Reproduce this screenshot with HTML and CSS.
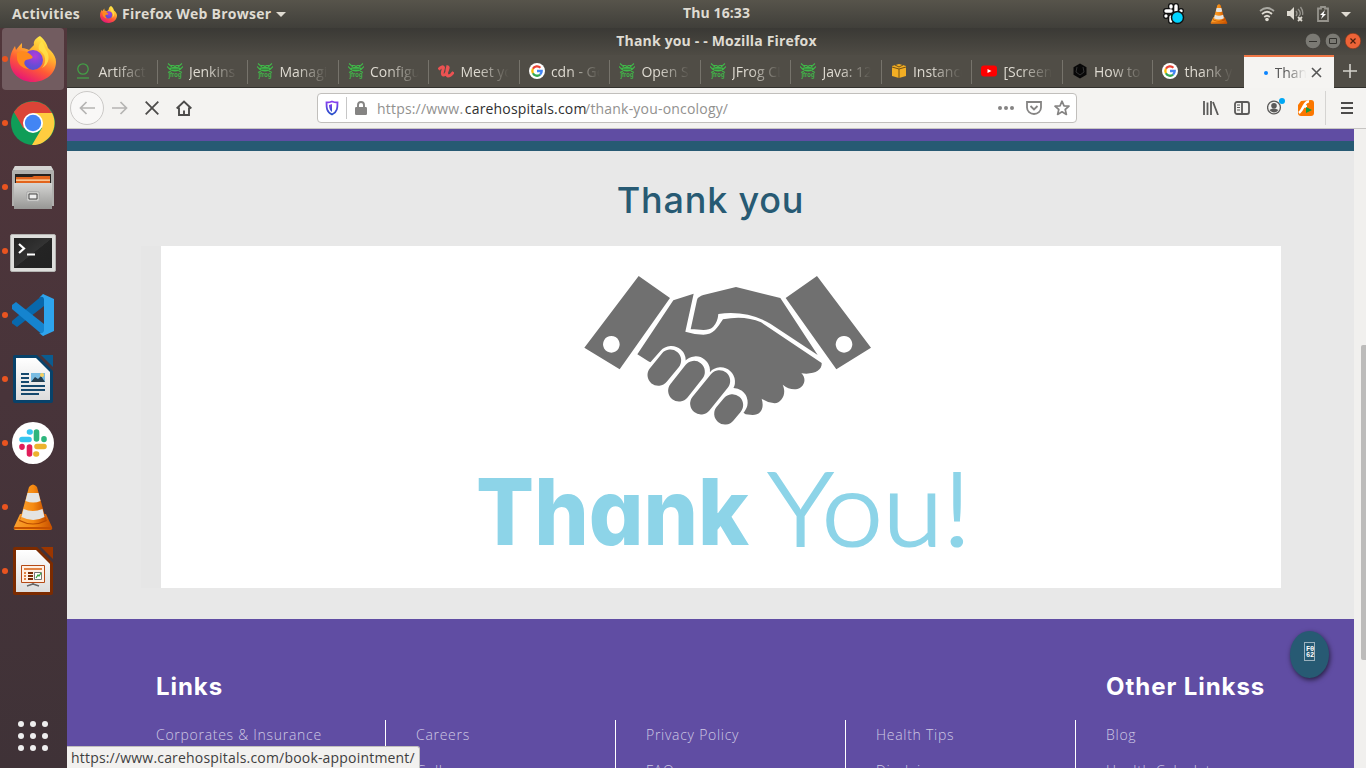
FILE: index.html
```html
<!DOCTYPE html>
<html lang="en">
<head>
<meta charset="utf-8">
<title>Thank you - - Mozilla Firefox</title>
<link rel="stylesheet" href="styles.css">
</head>
<body>
<svg class="defs" width="0" height="0" aria-hidden="true">
  <defs>
    <linearGradient id="ffFlame" x1=".8" y1="0" x2=".3" y2="1"><stop offset="0" stop-color="#fff44f"/><stop offset=".35" stop-color="#ffb52e"/><stop offset=".65" stop-color="#ff5a36"/><stop offset="1" stop-color="#e5127a"/></linearGradient>
    <radialGradient id="ffGlobe" cx=".6" cy=".3" r=".8"><stop offset="0" stop-color="#b13bdc"/><stop offset=".6" stop-color="#6b4bd6"/><stop offset="1" stop-color="#4d55d0"/></radialGradient>
    <linearGradient id="metal" x2="0" y2="1"><stop offset="0" stop-color="#d5d5d3"/><stop offset="1" stop-color="#979795"/></linearGradient>
    <linearGradient id="cone" x2="1" y2="0"><stop offset="0" stop-color="#f9a030"/><stop offset=".5" stop-color="#f68b12"/><stop offset="1" stop-color="#c85000"/></linearGradient>
    <linearGradient id="paper" x2="0" y2="1"><stop offset="0" stop-color="#fff"/><stop offset="1" stop-color="#dcdcdc"/></linearGradient>
    <linearGradient id="term" x2="1" y2="1"><stop offset="0" stop-color="#222"/><stop offset=".5" stop-color="#333"/><stop offset=".51" stop-color="#242424"/><stop offset="1" stop-color="#222"/></linearGradient>
    <linearGradient id="shield" x2="0" y2="1"><stop offset="0" stop-color="#8a3ff0"/><stop offset="1" stop-color="#2450c8"/></linearGradient>
  </defs>
  <symbol id="firefox" viewBox="0 0 46 46">
    <path d="M30 0c6 5 7 9 8 12l3 3c3 3 5 7 5 11 0 11-10 20-23 20S0 37 0 25C0 18 3 13 5 10l1 4c2-3 4-5 6-7v5c3 0 5 1 7 2l5-5c-1-4 2-7 6-9z" fill="url(#ffFlame)"/>
    <circle cx="23" cy="24" r="10" fill="url(#ffGlobe)"/>
    <path d="M7 17c5-3 11-2 15 3 2 2-1 3-6 4-3 2-2 6 3 9-7 0-12-6-12-11z" fill="#ff8a1d"/>
    <path d="M29 14c7 4 8 12 3 18 8-4 8-13 4-18l-4-9c-3 3-4 5-3 9z" fill="#ffe34b" opacity=".8"/>
  </symbol>
  <symbol id="frog" viewBox="0 0 16 16">
    <path d="M1 .5 5 4M15 .5 11 4M0 3.500l3 3M16 3.500l-3 3M4 2.500h2.500l1.500 1 1.500-1H12M1 9.500l3-1.500M15 9.500 12 8" fill="none" stroke="#40b649" stroke-width="1.100"/>
    <path d="M2 5.500C3 3.500 13 3.500 14 5.500 13 9.500 3 9.500 2 5.500z" fill="#40b649"/>
    <path d="M4 6.200h8" stroke="#315d32" stroke-width=".8"/>
    <text x="1.500" y="14.300" textLength="13" lengthAdjust="spacingAndGlyphs" class="frog-word">jfrog</text>
  </symbol>
  <symbol id="google" viewBox="0 0 16 16">
    <circle cx="8" cy="8" r="8" fill="#fff"/>
    <g fill="none" stroke-width="2.300"><path d="M11.400 4.700A4.700 4.700 0 0 0 3.900 5.800" stroke="#ea4335"/><path d="M3.900 5.800a4.700 4.700 0 0 0 0 4.400" stroke="#fbbc05"/><path d="M3.900 10.200a4.700 4.700 0 0 0 7.200 1.400" stroke="#34a853"/><path d="M11.100 11.600A4.700 4.700 0 0 0 12.700 8H8" stroke="#4285f4"/></g>
  </symbol>
  <symbol id="vlc" viewBox="0 0 42 46">
    <path d="M8 30h26l6 13q1 3-2 3H4q-3 0-2-3z" fill="url(#cone)"/><path d="M2 43h38v2H2z" fill="#c55000"/>
    <path d="M10 30h22l3 7q-14 7-28 0z" fill="#b84a00"/>
    <path d="M17 3q4-5 8 0l9 33q-13 7-26 0z" fill="url(#cone)"/>
    <path d="M15.500 9h11l2 8q-7 3-15 0zM11.500 25q9 4 19 0l2 8q-11 6-23 0z" fill="#e4e4e2"/>
  </symbol>
  <symbol id="slackmark" viewBox="0 0 28 28">
    <g stroke-width="5.600" stroke-linecap="round" fill="none"><path d="M3 10.500h7M10.500 3h.6" stroke="#36c5f0"/><path d="M17.500 3v7M25 10.500v-.6" stroke="#2eb67d"/><path d="M25 17.500h-7M17.500 25h-.6" stroke="#ecb22e"/><path d="M10.500 25v-7M3 17.500v.6" stroke="#e01e5a"/></g>
  </symbol>
</svg>

<header class="topbar">
  <span class="activities">Activities</span>
  <svg class="top-ff" width="17" height="17"><use href="#firefox"/></svg>
  <span class="appname">Firefox Web Browser</span>
  <i class="caret"></i>
  <span class="clock">Thu 16:33</span>
  <div class="tray">
    <svg width="22" height="22" viewBox="0 0 22 22"><g stroke="#111" stroke-width="6" stroke-linecap="round"><path d="M3 8h5M8 3v1M13 3v5M18 8v0M8 18v-4M3 13v0"/></g><g stroke="#fff" stroke-width="3.400" stroke-linecap="round"><path d="M3 8h5M8 3v1M13 3v5M18 8v0M8 18v-4M3 13v0"/></g><circle cx="14.500" cy="14.500" r="6" fill="#00d4ff" stroke="#111" stroke-width="1.500"/></svg>
    <svg class="t-vlc" width="18" height="20"><use href="#vlc"/></svg>
    <svg class="t-wifi" width="16" height="16" viewBox="0 0 16 16" fill="none" stroke-width="1.700"><path d="M1 5q7-6 14 0" stroke="#aaa9a2"/><path d="M3 8q5-4.500 10 0M5.200 11q2.800-2.500 5.600 0" stroke="#dfdbd2"/><circle cx="8" cy="13.500" r="1.800" fill="#dfdbd2"/></svg>
    <svg class="t-vol" width="17" height="16" viewBox="0 0 17 16"><path d="M0 5h3l4-4v13l-4-4H0z" fill="#dfdbd2"/><path d="M9 5q2 2.500 0 5M11 3q4 4 1 7M13.500 1q3 4 2 8" fill="none" stroke="#96948d" stroke-width="1.300"/><path d="m11 11 4 4m0-4-4 4" stroke="#dfdbd2" stroke-width="1.800"/></svg>
    <svg class="t-bat" width="12" height="16" viewBox="0 0 12 16"><path d="M1 2.500h3V1h4v1.500h3V15H1z" fill="none" stroke="#96948d" stroke-width="1.800"/><path d="M8 4 3 9h2.500L4 13l5-5H6.500z" fill="#fff"/></svg>
    <i class="caret"></i>
  </div>
</header>

<div class="desktop">
  <nav class="dock">
    <div class="app active"><svg width="46" height="46"><use href="#firefox"/></svg></div>
    <div class="app"><svg width="44" height="44" viewBox="0 0 44 44"><circle cx="22" cy="22" r="22" fill="#109d58"/><path d="M2.900 11A22 22 0 0 1 41.100 12H22L12.500 27.500z" fill="#db4437"/><path d="M22 12h19.100A22 22 0 0 1 21 44l10-17z" fill="#ffcd40"/><circle cx="22" cy="22" r="10" fill="#fff"/><circle cx="22" cy="22" r="8.200" fill="#4285f4"/></svg></div>
    <div class="app"><svg width="42" height="44" viewBox="0 0 42 44"><path d="M3 1h36l3 5v35H0V6z" fill="#b0b0ae"/><path d="M3 1h36l2 4H1z" fill="#d5d5d3"/><path d="M3 9h36v10H3z" fill="#262220"/><path d="M4 12h16l2-1h16v7H4z" fill="#e2641c"/><path d="M4 14.500h34v1.200H4z" fill="#ffe3b8"/><path d="M2 18h38v26H2z" fill="url(#metal)"/><rect x="14.500" y="26.500" width="13" height="10" rx="2" fill="#c9c9c7" stroke="#aaa"/><path d="M17 29h8v5h-8z" fill="#eee" stroke="#444"/></svg></div>
    <div class="app"><svg class="terminal" width="46" height="38" viewBox="0 0 46 38"><rect x=".5" y=".5" width="45" height="37" rx="1.500" fill="#dededc" stroke="#b4b4b2"/><path d="M4 4h38v30H4z" fill="url(#term)"/><path d="m9 10 5 4.500L9 19" fill="none" stroke="#fff" stroke-width="2.200"/><path d="M17 20.500h8" stroke="#fff" stroke-width="2"/></svg></div>
    <div class="app"><svg width="43" height="42" viewBox="0 0 43 42"><path d="m0 27 32-27v12L5 33 1 30q-2-1-1-3z" fill="#0868ac"/><path d="m0 11 4-3 28 22v12L0 15q-1-2 0-4z" fill="#1584cf"/><path d="m31 0 11 5v32l-11 5-4-3q4 1 5-2V5q-1-4-5-1z" fill="#2ea4ed"/></svg></div>
    <div class="app"><svg width="40" height="48" viewBox="0 0 40 48"><path d="M2 0h22l16 16v30q0 2-2 2H2q-2 0-2-2V2q0-2 2-2z" fill="#08426a"/><path d="M28 0h12v12z" fill="#0b5c90"/><path d="M3 3h20l14 14v28H3z" fill="url(#paper)"/><path d="M8 19h8M8 23h8M8 27h8M8 31h24M8 35h24M8 39h18" stroke="#15496d" stroke-width="2"/><path d="M18 18h14v9H18z" fill="#79bce2"/><path d="m18 27 4-5 3 2 3-3 4 6z" fill="#253f50"/><circle cx="29" cy="20" r="2" fill="#f7cf5b"/></svg></div>
    <div class="app"><svg width="42" height="42" viewBox="0 0 42 42"><circle cx="21" cy="21" r="21" fill="#fff"/><use href="#slackmark" x="7" y="7" width="28" height="28"/></svg></div>
    <div class="app"><svg width="42" height="46"><use href="#vlc"/></svg></div>
    <div class="app"><svg width="40" height="48" viewBox="0 0 40 48"><path d="M2 0h22l16 16v30q0 2-2 2H2q-2 0-2-2V2q0-2 2-2z" fill="#7c2b00"/><path d="M28 0h12v12z" fill="#9b3600"/><path d="M3 3h20l14 14v28H3z" fill="url(#paper)"/><path d="M8.500 18.500h23v17h-23z" fill="#fff0e4" stroke="#b54a16"/><path d="M11 22h18" stroke="#e28345" stroke-width="2"/><path d="M15 26h5M15 29h5M15 32h5" stroke="#7b2d04" stroke-width="2"/><path d="M11 26h2M11 29h2M11 32h2" stroke="#e28345" stroke-width="2"/><path d="M21.500 25.500h7v7h-7z" fill="#fff" stroke="#777"/><path d="m23 31 2-3 1 1 2-3" fill="none" stroke="#37a53b" stroke-width="1.200"/><path d="M20 36v1l-6 2M20 37l6 2" fill="none" stroke="#666" stroke-width="1.500"/></svg></div>
    <div class="grid-btn"><i></i><i></i><i></i><i></i><i></i><i></i><i></i><i></i><i></i></div>
  </nav>

  <main class="window">
    <div class="titlebar">
      <span class="wintitle">Thank you - - Mozilla Firefox</span>
      <div class="winbtns">
        <svg width="16" height="16" viewBox="0 0 16 16"><circle cx="8" cy="8" r="7.800" fill="#7b7a74" stroke="#353430" stroke-width=".6"/><path d="M4 8.500h8" stroke="#33322e"/></svg>
        <svg width="16" height="16" viewBox="0 0 16 16"><circle cx="8" cy="8" r="7.800" fill="#7b7a74" stroke="#353430" stroke-width=".6"/><path d="M4.500 5.500h7v5h-7z" fill="none" stroke="#33322e"/></svg>
        <svg width="16" height="16" viewBox="0 0 16 16"><circle cx="8" cy="8" r="7.800" fill="#ed6337" stroke="#823519" stroke-width=".6"/><path d="m5.500 5.500 5 5m0-5-5 5" stroke="#4b1f0e" stroke-width="1.200"/></svg>
      </div>
    </div>
    <div class="tabs">
      <div class="tab"><svg width="16" height="16" viewBox="0 0 16 16" fill="none" stroke="#43a047" stroke-width="1.300"><circle cx="7" cy="6" r="5.200"/><path d="M1 15h12"/></svg><span>Artifactory</span></div>
      <div class="tab"><svg width="16" height="16"><use href="#frog"/></svg><span>Jenkins</span></div>
      <div class="tab"><svg width="16" height="16"><use href="#frog"/></svg><span>Managing</span></div>
      <div class="tab"><svg width="16" height="16"><use href="#frog"/></svg><span>Configure</span></div>
      <div class="tab"><svg width="16" height="16" viewBox="0 0 16 16"><path d="M.5 6.500q4-4 5-2c0 2-2.500 6-.5 7.500 2.500 1 4.500-4 5.500-8M10 2.500C8.500 8 8 12.500 10 13q3 0 5.500-4" fill="none" stroke="#ec5252" stroke-width="2.900"/></svg><span>Meet your</span></div>
      <div class="tab"><svg width="16" height="16"><use href="#google"/></svg><span>cdn - Google</span></div>
      <div class="tab"><svg width="16" height="16"><use href="#frog"/></svg><span>Open Source</span></div>
      <div class="tab"><svg width="16" height="16"><use href="#frog"/></svg><span>JFrog CLI</span></div>
      <div class="tab"><svg width="16" height="16"><use href="#frog"/></svg><span>Java: 12</span></div>
      <div class="tab"><svg width="16" height="16" viewBox="0 0 16 16"><path d="m1 3 7-2 7 2v10l-7 2-7-2z" fill="#f2ae24"/><path d="m1 4 7 2 7-2M8 6v9M4 2l4 2 4-2" fill="none" stroke="#715017"/></svg><span>Instances</span></div>
      <div class="tab"><svg width="16" height="16" viewBox="0 0 16 16"><rect y="2.500" width="16" height="11" rx="3" fill="#f00"/><path d="m6.500 6 4 2-4 2z" fill="#fff"/></svg><span>[Screen</span></div>
      <div class="tab"><svg width="16" height="16" viewBox="0 0 16 16"><path d="m8 .5 6.500 3.700v7.600L8 15.500l-6.500-3.700V4.200z" fill="#080808"/><path d="m5 4-1 5 4 3 4-3-1-5" fill="none" stroke="#343434"/></svg><span>How to</span></div>
      <div class="tab last"><svg width="16" height="16"><use href="#google"/></svg><span>thank you</span></div>
      <div class="tab current"><i class="dot"></i><span>Thank</span><svg class="close" width="11" height="11" viewBox="0 0 11 11"><path d="m1 1 9 9m0-9-9 9" stroke="#555" stroke-width="1.600"/></svg></div>
      <svg class="plus" width="14" height="14" viewBox="0 0 14 14"><path d="M7 0v14M0 7h14" stroke="#d4d2cc" stroke-width="1.600"/></svg>
    </div>

    <div class="toolbar">
      <div class="back"><svg width="16" height="14" viewBox="0 0 16 14" fill="none" stroke="#b5b4b3" stroke-width="1.700"><path d="M16 7H1.500M7.500 1l-6 6 6 6"/></svg></div>
      <svg class="fwd" width="16" height="14" viewBox="0 0 16 14" fill="none" stroke="#b5b4b3" stroke-width="1.700"><path d="M0 7h14.500M8.500 1l6 6-6 6"/></svg>
      <svg class="stop" width="14" height="14" viewBox="0 0 14 14"><path d="m.7.700 12.600 12.600m0-12.600L.7 13.300" stroke="#4c4b4a" stroke-width="1.800"/></svg>
      <svg class="home" width="16" height="16" viewBox="0 0 16 16" fill="none" stroke="#4c4b4a" stroke-width="1.900"><path d="m.7 8.500 7.300-7 7.300 7M3 7.500V15h10V7.500"/><path d="M8 15v-4.500"/></svg>
      <div class="urlbar">
        <svg class="u-shield" width="14" height="16" viewBox="0 0 14 16"><path d="M7 1.500q2.500 1 5.500 1c0 5 0 9.500-5.500 12-5.500-2.500-5.500-7-5.500-12 3 0 4.500-.5 5.500-1z" fill="none" stroke="url(#shield)" stroke-width="1.800"/><path d="M7 4v8q-3-2-3-7z" fill="url(#shield)"/></svg>
        <i class="sep"></i>
        <svg class="u-lock" width="12" height="14" viewBox="0 0 12 14"><path d="M3 7V4q0-3 3-3t3 3v3" fill="none" stroke="#858483" stroke-width="1.900"/><rect y="6" width="12" height="8" rx="1.200" fill="#858483"/></svg>
        <span class="url">https://www.<b>carehospitals.com</b>/thank-you-oncology/</span>
        <svg class="u-dots" width="16" height="4" viewBox="0 0 16 4" fill="#858483"><circle cx="2" cy="2" r="2"/><circle cx="8" cy="2" r="2"/><circle cx="14" cy="2" r="2"/></svg>
        <svg class="u-pocket" width="16" height="14" viewBox="0 0 16 14" fill="none" stroke="#858483" stroke-width="1.800"><path d="M1 1h14v5.500a7 6.500 0 0 1-14 0zM4.500 5 8 8.500 11.500 5"/></svg>
        <svg class="u-star" width="16" height="16" viewBox="0 0 16 16" fill="none" stroke="#858483" stroke-width="1.700" stroke-linejoin="round"><path d="m8 1.200 2 4.600 5 .4-3.800 3.300 1.200 4.900L8 11.800l-4.400 2.600 1.200-4.900L1 6.200l5-.4z"/></svg>
      </div>
      <svg class="b-lib" width="16" height="14" viewBox="0 0 16 14" stroke="#5b5a59" stroke-width="1.800"><path d="M1 0v14M4.500 1.500V14M8 0v14M10 1l5 13"/></svg>
      <svg class="b-side" width="16" height="14" viewBox="0 0 16 14" fill="none" stroke="#5b5a59" stroke-width="1.800"><rect x="1" y="1" width="14" height="12" rx="2"/><path d="M8 1v12"/><path d="M3 4h3M3 6.500h3M3 9h3" stroke-width="1"/></svg>
      <svg class="b-acct" width="18" height="17" viewBox="0 0 18 17"><circle cx="7" cy="9.500" r="6.400" fill="none" stroke="#5b5a59" stroke-width="1.300"/><circle cx="7" cy="7.700" r="2.800" fill="#5b5a59"/><path d="M2.500 12q4.500-3 9 0-4.500 5-9 0z" fill="#5b5a59"/><circle cx="15" cy="3" r="3" fill="#00a8f5"/></svg>
      <svg class="b-flash" width="16" height="16" viewBox="0 0 16 16"><path d="M3 1 13 0q3 0 3 3v10q0 3-3 3H3q-3 0-3-3V5z" fill="#fb7700"/><path d="M11 1.500C6 1 6 9 1 13M4.500 6.500H9" fill="none" stroke="#fff" stroke-width="2.500"/><path d="m8 7 6 3-6 3z" fill="#159b3b"/></svg>
      <i class="bar"></i>
      <svg class="b-menu" width="12" height="12" viewBox="0 0 12 12" stroke="#4c4b4a" stroke-width="1.900"><path d="M0 1h12M0 6h12M0 11h12"/></svg>
    </div>

    <div class="viewport">
      <div class="page">
        <div class="purple-strip"></div>
        <div class="teal-strip"></div>
        <section class="thanks">
          <h1>Thank you</h1>
          <div class="card">
            <svg class="art" width="1120" height="342" viewBox="161 246 1120 342">
              <g transform="translate(570 260) scale(.33333)" fill="#707070">
                <path fill-rule="evenodd" d="M206 48 300 114 149 328 43 263zM124 228a25 25 0 1 0 .1 0zM741 48 903 263 799 328 647 114zM822 228a25 25 0 1 0 .1 0z"/>
                <path d="M389 110Q393 107 400 105L498 81 631 114 743 285 601 191Q530 150 445 162 443 187 429 201C414 215 390 208 362 208L381 120Q382 113 389 110z"/>
                <path d="M310 121 371 101 346 215Q375 224 400 224C432 224 440 205 459 178Q523 165 573 187L755 309C757 330 735 345 694 340 712 356 702 382 682 387Q659 391 638 374C651 402 635 427 614 430Q593 428 575 416C584 445 572 465 548 465L527 463 440 405 235 304 202 283z"/>
                <g fill="none" stroke-linecap="round" stroke="#fff" stroke-width="86"><path d="M304 301 267 343M377 332 326 393M452 365 392 433M490 427 464 462"/></g>
                <g fill="none" stroke-linecap="round" stroke="#707070" stroke-width="65"><path d="M301 301 265 345M372 335 327 392M448 363 393 431M487 435 465 461"/></g>
              </g>
              <text class="art-bold" x="476" y="545" textLength="273" lengthAdjust="spacingAndGlyphs">Thank</text>
              <text class="art-thin" x="768" y="545.500" textLength="203" lengthAdjust="spacingAndGlyphs">You!</text>
            </svg>
          </div>
        </section>
        <footer class="footer">
          <div class="col first"><h2>Links</h2><ul><li>Corporates &amp; Insurance</li></ul></div>
          <div class="col"><h2></h2><ul><li>Careers</li><li>Gallery</li></ul></div>
          <div class="col"><h2></h2><ul><li>Privacy Policy</li><li>FAQ</li></ul></div>
          <div class="col"><h2></h2><ul><li>Health Tips</li><li>Disclaimer</li></ul></div>
          <div class="col end"><h2>Other Linkss</h2><ul><li>Blog</li><li>Health Calculator</li></ul></div>
        </footer>
      </div>
      <div class="scroll"><i></i></div>
      <div class="totop"><span>F0<br>62</span></div>
      <div class="status">https://www.carehospitals.com/book-appointment/</div>
    </div>
  </main>
</div>
</body>
</html>
```
FILE: styles.css
```css
* { box-sizing: border-box; }
body { margin: 0; width: 1366px; height: 768px; overflow: hidden; display: flex; flex-direction: column; font-family: "Open Sans", "Noto Sans", sans-serif; font-size: 14px; }
svg { display: block; flex: none; }
.defs { position: absolute; }
.frog-word { font: bold 6.500px "Liberation Sans", sans-serif; fill: #40b649; }

.topbar { height: 28px; flex: none; display: flex; align-items: center; position: relative; background: linear-gradient(#57544b, #403f3a); color: #dfdbd2; font-weight: 700; padding: 0 15px 0 12px; line-height: 26px; }
.topbar > span { white-space: nowrap; }
.activities { width: 88px; letter-spacing: .3px; }
.top-ff { margin-right: 5px; }
.appname { width: 150px; letter-spacing: .24px; }
.caret { border: 5px solid transparent; border-top: 5px solid #dfdbd2; border-bottom: 0; flex: none; }
.appname + .caret { margin-left: 4px; }
.clock { position: absolute; left: 683px; top: 0; letter-spacing: .1px; }
.tray { margin-left: auto; display: flex; align-items: center; }
.t-vlc { margin-left: 25px; }
.t-wifi { margin-left: 31px; }
.t-vol { margin-left: 12px; }
.t-bat { margin-left: 13px; margin-right: 12px; }

.desktop { flex: 1; display: flex; min-height: 0; }
.dock { width: 67px; flex: none; display: flex; flex-direction: column; background: linear-gradient(#51363b, #48343a 50%, #3f3237); padding-bottom: 17px; }
.app { height: 62px; margin: 0 3px 2px 2px; flex: none; border-radius: 4px; position: relative; display: flex; align-items: center; justify-content: center; }
.app::before { content: ""; position: absolute; left: 0; top: 28px; width: 6px; height: 6px; border-radius: 50%; background: #e95420; }
.active { background: #725c60; }
.terminal { margin-top: 3px; }
.grid-btn { margin: auto auto 0 18px; display: grid; grid-template-columns: repeat(3, 6px); gap: 6px; }
.grid-btn i { width: 6px; height: 6px; border-radius: 50%; background: #eee; }

.window { flex: 1; min-width: 0; display: flex; flex-direction: column; }
.titlebar { height: 27px; flex: none; display: flex; justify-content: center; position: relative; background: linear-gradient(#3a3935, #4e4b44); color: #dfdbd2; font-weight: 700; line-height: 26px; font-size: 14px; }
.wintitle { white-space: nowrap; letter-spacing: .17px; }
.winbtns { position: absolute; right: 5px; top: 5px; display: flex; gap: 4px; }

.tabs { height: 33px; flex: none; display: flex; background: #504d46; border-bottom: 1px solid #32312d; }
.tab { width: 90.500px; flex: none; display: flex; align-items: center; gap: 6px; padding-left: 9.400px; color: #dfdbd2; position: relative; }
.tab::after { content: ""; position: absolute; right: 0; top: 5px; width: 1px; height: 24px; background: #76736b; }
.tab.last::after, .tab.current::after { display: none; }
.tab span { width: 50px; overflow: hidden; white-space: nowrap; -webkit-mask-image: linear-gradient(90deg, #000 35%, transparent 98%); mask-image: linear-gradient(90deg, #000 35%, transparent 98%); }
.tab.current { background: #f5f4f2; border-top: 2px solid #f07746; margin-bottom: -1px; padding-left: 20px; gap: 7px; color: #555; }
.tab.current span { width: 32px; }
.dot { width: 4px; height: 4px; border-radius: 50%; background: #0a84ff; flex: none; }
.close { margin-left: -3px; }
.plus { margin: 9px 0 0 9px; }

.toolbar { height: 41px; flex: none; display: flex; align-items: center; background: #f4f3f1; border-bottom: 1px solid #c7c5c3; padding-left: 3px; }
.back { width: 34px; height: 34px; border-radius: 50%; border: 1px solid #cbc9c7; background: #f9f8f7; display: flex; align-items: center; justify-content: center; }
.fwd { margin-left: 8px; }
.stop { margin-left: 17px; }
.home { margin-left: 17px; }
.urlbar { width: 760px; height: 30px; margin-left: 125px; border: 1px solid #c1bfbc; border-radius: 4px; background: #fff; display: flex; align-items: center; padding-left: 7px; }
.sep { width: 1px; height: 22px; background: #c7c7c7; margin: 0 8px 0 7px; }
.url { width: 621px; margin-left: 10px; color: #92918f; white-space: nowrap; font-size: 14px; letter-spacing: .19px; }
.url b { font-weight: 400; color: #2f2f2f; margin-left: 1.500px; margin-right: -1.500px; }
.u-pocket { margin-left: 12px; }
.u-star { margin-left: 12px; }
.b-lib { margin-left: 126px; }
.b-side { margin-left: 15px; }
.b-acct { margin: -3px 0 0 17px; }
.b-flash { margin-left: 13px; }
.bar { width: 1px; height: 34px; margin: 0 15px 0 11px; background: #d5d4d2; }

.viewport { flex: 1; min-height: 0; display: flex; position: relative; overflow: hidden; }
.page { width: 1287px; flex: none; display: flex; flex-direction: column; }
.purple-strip { height: 12px; background: #604da3; flex: none; }
.teal-strip { height: 10px; background: #275a73; flex: none; }
.thanks { height: 468px; flex: none; background: #e8e8e8; padding-left: 74px; }
h1 { margin: 0; height: 95px; line-height: 99px; text-align: center; width: 1139px; color: #275a73; font-family: Inter, sans-serif; font-weight: 450; font-size: 36px; letter-spacing: .8px; }
.card { margin-left: 20px; width: 1120px; height: 342px; background: #fff; box-shadow: -20px 0 0 #e6e6e6; }
.art text { fill: #8dd4e8; }
.art .art-bold { font-family: Inter, sans-serif; font-feature-settings: "cv11" 1; font-size: 92px; font-weight: 800; }
.art .art-thin { font-family: Lato, sans-serif; font-size: 102.500px; font-weight: 300; stroke: #8dd4e8; stroke-width: 2.200px; }

.footer { flex: 1; background: #604da3; display: flex; padding: 49px 0 0 59px; overflow: hidden; }
.col { width: 230px; flex: none; }
.col.first { width: 260px; }
h2 { margin: 0; height: 52px; padding-left: 30px; line-height: 38px; color: #fff; font-family: Inter, sans-serif; font-size: 24px; font-weight: 700; letter-spacing: .95px; white-space: nowrap; }
.col ul { margin: 0; list-style: none; padding: 0 0 0 30px; height: 120px; border-right: 1px solid #fff; }
.col.end ul { border: 0; }
.col li { height: 36px; line-height: 30px; font-weight: 300; font-size: 14px; letter-spacing: .72px; color: #cfc9e3; white-space: nowrap; }

.scroll { width: 12px; background: #f1f0ee; padding: 216px 0 0 7px; }
.scroll i { display: block; height: 315px; background: #bcbbba; border-radius: 2px 0 0 2px; }
.totop { position: absolute; left: 1223px; top: 502px; width: 39px; height: 47px; border-radius: 50%; background: #275a73; box-shadow: 1px 2px 5px rgba(0,0,0,.6); }
.totop span { position: absolute; left: 14px; top: 11px; width: 11px; height: 19px; border: 1px solid #9bb2be; color: #fff; font: 700 7px/6px "Liberation Mono", monospace; letter-spacing: -.2px; padding: 3px 0 0 1px; }
.status { position: absolute; left: 0; bottom: 0; height: 22px; width: 353px; background: #f2f1ef; border: 1px solid #c1bfbc; border-left: 0; border-bottom: 0; border-top-right-radius: 3px; padding-left: 4px; line-height: 22px; color: #3e3e3e; letter-spacing: .19px; white-space: nowrap; }
```
